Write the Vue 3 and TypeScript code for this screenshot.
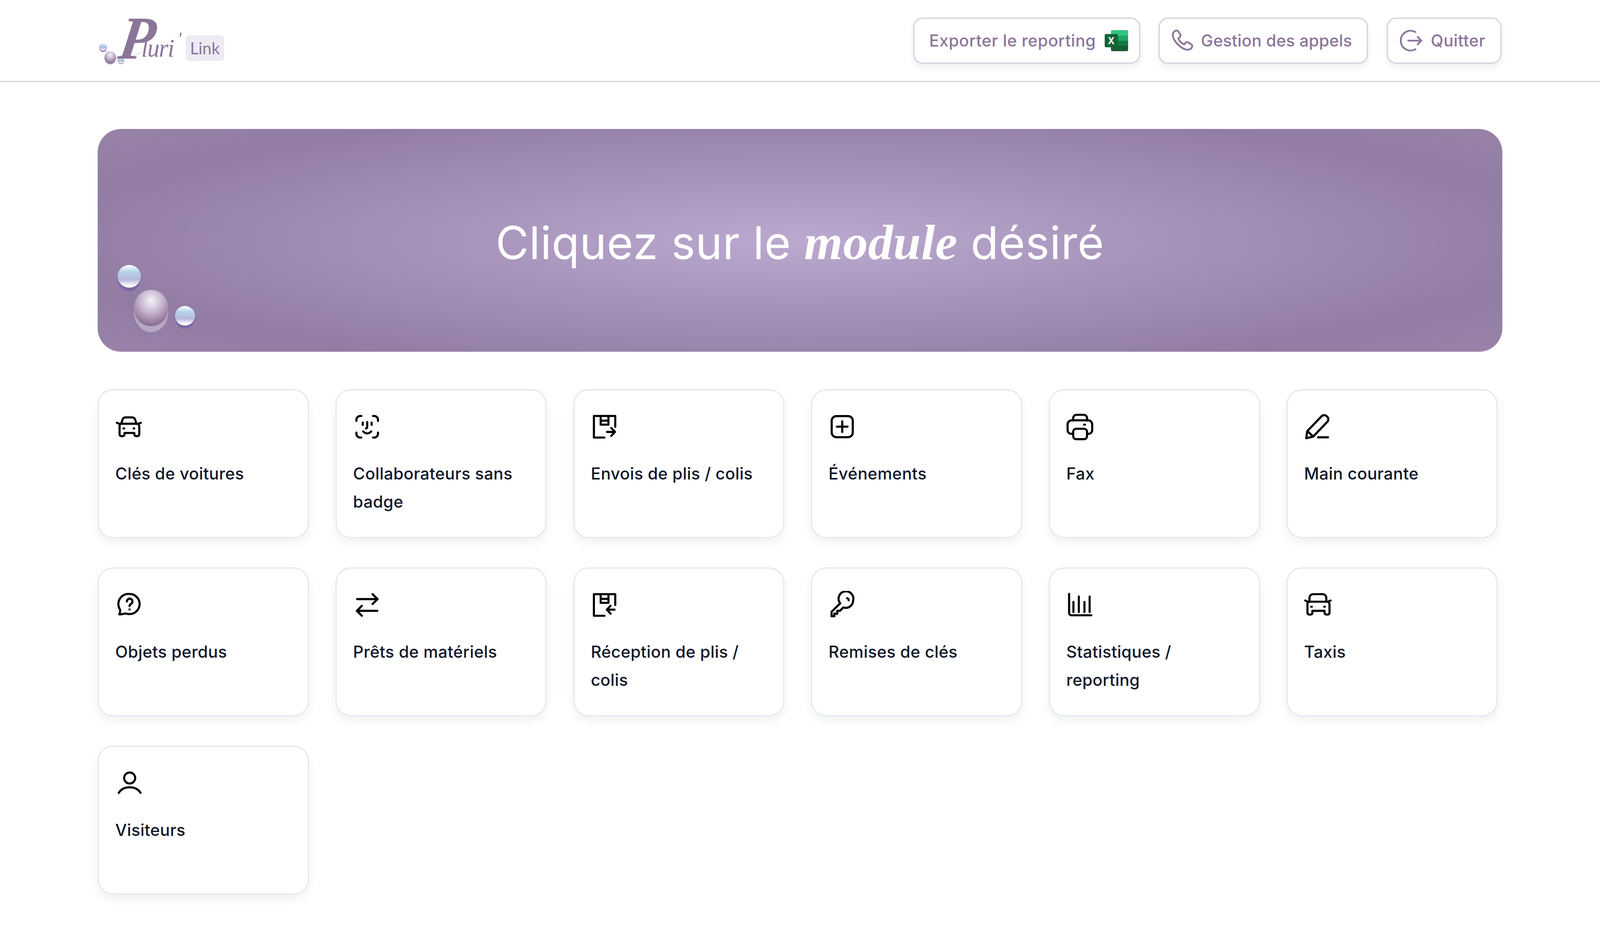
<script setup lang="ts">
// Module launcher: header actions, hero banner and the grid of module cards

interface ModuleCard {
  label: string
  paths: string[]
}

const squareBox = ['M21 12V2.8H2.8v18.4h9', 'M8.6 2.8v7.4h6.6V2.8', 'M8.6 6.8h6.6']

const modules: ModuleCard[] = [
  {
    label: 'Clés de voitures',
    paths: [
      'M5.1 9.4 6.2 6a2.9 2.9 0 0 1 2.7-2h5.4A2.9 2.9 0 0 1 17 6l1.1 3.4',
      'M1.4 8.6l2.2.9M21.8 8.6l-2.2.9',
      'M5 9.4h13.2a2.3 2.3 0 0 1 2.3 2.3v6.8a1.5 1.5 0 0 1-1.5 1.5h-1.2a1.5 1.5 0 0 1-1.5-1.5v-1.2H7.9v1.2a1.5 1.5 0 0 1-1.5 1.5H5.2a1.5 1.5 0 0 1-1.5-1.5v-6.8A2.3 2.3 0 0 1 5 9.4z',
      'M7.1 13.4h.5M15.7 13.4h.5'
    ]
  },
  {
    label: 'Collaborateurs sans badge',
    paths: [
      'M7 2.8H6A3.2 3.2 0 0 0 2.8 6v1',
      'M17 2.8h1A3.2 3.2 0 0 1 21.2 6v1',
      'M2.8 17v1A3.2 3.2 0 0 0 6 21.2h1',
      'M21.2 17v1a3.2 3.2 0 0 1-3.2 3.2h-1',
      'M8.2 8.4v2M15.8 8.4v2',
      'M12 8v4.4a1 1 0 0 1-1 1',
      'M8.6 16c1 1.1 2.2 1.7 3.4 1.7s2.4-.6 3.4-1.7'
    ]
  },
  {
    label: 'Envois de plis / colis',
    paths: [...squareBox, 'M14 16.4h6.2', 'M17.6 13l3.2 3.4-3.2 3.4']
  },
  {
    label: 'Événements',
    paths: [
      'M6.7 2.9h10a4 4 0 0 1 4 4v10a4 4 0 0 1-4 4h-10a4 4 0 0 1-4-4v-10a4 4 0 0 1 4-4z',
      'M11.7 7.4v9M7.2 11.9h9'
    ]
  },
  {
    label: 'Fax',
    paths: [
      'M5.8 6.6V4.6a2.8 2.8 0 0 1 2.8-2.8h6.2a2.8 2.8 0 0 1 2.8 2.8v2',
      'M5.8 18H4a3 3 0 0 1-3-3V10a3.5 3.5 0 0 1 3.5-3.5h14A3.5 3.5 0 0 1 22 10v5a3 3 0 0 1-3 3h-1.4',
      'M8.3 13.7h6.8a2.5 2.5 0 0 1 2.5 2.5v3.9a2.5 2.5 0 0 1-2.5 2.5H8.3a2.5 2.5 0 0 1-2.5-2.5v-3.9a2.5 2.5 0 0 1 2.5-2.5z',
      'M15.1 10.2h.7'
    ]
  },
  {
    label: 'Main courante',
    paths: [
      'M1.6 21.8l1-6.2L14.8 3a3 3 0 0 1 4.3 0l.5.5a3 3 0 0 1 0 4.3L7.6 20.4z',
      'M2.6 15.6l5 4.8',
      'M11.8 21h8.4'
    ]
  },
  {
    label: 'Objets perdus',
    paths: [
      'M12.2 2.6a8.6 8.6 0 0 1 0 17.2c-1.4 0-2.4-.5-3.4-.5-1.6 0-3.2 1-5.4.7.7-1.5 1-2.8.7-4.1A8.6 8.6 0 0 1 12.2 2.6z',
      'M9.9 9a2.4 2.4 0 1 1 3.6 2.1c-.9.5-1.3 1.1-1.3 1.9',
      'M12.2 15.7v.1'
    ]
  },
  {
    label: 'Prêts de matériels',
    paths: ['M3.4 7h17.4', 'M16.6 2.8 20.8 7l-4.2 4.2', 'M20.6 17H3.2', 'M7.4 12.8 3.2 17l4.2 4.2']
  },
  {
    label: 'Réception de plis / colis',
    paths: [...squareBox, 'M20.4 16h-6.2', 'M17 12.6 13.8 16l3.2 3.4']
  },
  {
    label: 'Remises de clés',
    paths: [
      'M21 8.2a6.3 6.3 0 0 1-8.4 5.9L9.8 17H7.5v2.4H5V21.6H2.6v-3.8L10 10.6A6.3 6.3 0 1 1 21 8.2z',
      'M15.8 6.2a1.6 1.6 0 0 1 1.4 1.8'
    ]
  },
  {
    label: 'Statistiques / reporting',
    paths: [
      'M2.3 2.6v16.2a2 2 0 0 0 2 2H21.2',
      'M6 9.4v8.6M10.6 4.8v13.2M15.4 9.4v8.6M19.8 4.8v13.2'
    ]
  },
  {
    label: 'Taxis',
    paths: [
      'M4.4 9.2V6A3.2 3.2 0 0 1 7.6 2.8h8A3.2 3.2 0 0 1 18.8 6v3.2',
      'M.8 8.2l2.2 1M22.4 8.2l-2.2 1',
      'M3.9 9.2h15.4a2.3 2.3 0 0 1 2.2 2.3v7.2a1.5 1.5 0 0 1-1.5 1.5h-1.2a1.5 1.5 0 0 1-1.5-1.5V17H6.9v1.7a1.5 1.5 0 0 1-1.5 1.5H4.2a1.5 1.5 0 0 1-1.5-1.5v-7.2a2.3 2.3 0 0 1 1.2-2.3z',
      'M5.9 13.5h.5M17 13.5h.5'
    ]
  },
  {
    label: 'Visiteurs',
    paths: ['M12.3 2.9a4.7 4.7 0 1 1 0 9.4 4.7 4.7 0 0 1 0-9.4z', 'M3 20.3c2-3.3 5.5-4.8 9.3-4.8s7.3 1.5 9.3 4.8']
  }
]
</script>

<template>
  <div class="page">
    <header class="topbar">
      <div class="brand">
        <svg class="logo" height="180" viewBox="0 0 240 180" preserveAspectRatio="none">
          <defs>
            <linearGradient id="pearlBlue" x1="0" y1="0" x2="0" y2="1">
              <stop offset="0" stop-color="#ffffff" />
              <stop offset="0.3" stop-color="#b5d3e8" />
              <stop offset="0.65" stop-color="#b8b8de" />
              <stop offset="0.92" stop-color="#ffffff" />
            </linearGradient>
            <radialGradient id="pearlMauve" cx="0.5" cy="0.3" r="0.7">
              <stop offset="0" stop-color="#f6f3f8" />
              <stop offset="0.45" stop-color="#c8b8d0" />
              <stop offset="1" stop-color="#86688f" />
            </radialGradient>
          </defs>
          <path d="M20 119 28 125M48 140c30 0 54-6 72-18" fill="none" stroke="#c9bfd4" stroke-width="1.5" />
          <ellipse cx="14.5" cy="112" rx="10.5" ry="11" fill="#8d78a8" />
          <ellipse cx="14.5" cy="110" rx="10.5" ry="9.5" fill="url(#pearlBlue)" />
          <ellipse cx="34" cy="139" rx="15.5" ry="16" fill="#b8a9c6" />
          <ellipse cx="34" cy="137" rx="15.5" ry="15.5" fill="url(#pearlMauve)" />
          <ellipse cx="63" cy="145" rx="9" ry="9" fill="#8d78a8" />
          <ellipse cx="63" cy="144" rx="9" ry="8" fill="url(#pearlBlue)" />
          <text class="logo-cap" x="74" y="140" transform="skewX(-9)">P</text>
          <text class="logo-rest" x="118" y="135">luri</text>
          <text class="logo-rest logo-tick" x="216" y="106">'</text>
        </svg>
        <span class="brand-tag">Link</span>
      </div>

      <nav class="actions">
        <button type="button" class="action-btn export-btn">
          <span>Exporter le reporting</span>
          <svg width="60" height="54" viewBox="0 0 60 54">
            <path d="M20 0h36a4 4 0 0 1 4 4v10H16V4a4 4 0 0 1 4-4z" fill="#33c481" />
            <rect x="16" y="14" width="44" height="13" fill="#21a366" />
            <rect x="16" y="27" width="44" height="13" fill="#107c41" />
            <path d="M16 40h44v10a4 4 0 0 1-4 4H20a4 4 0 0 1-4-4z" fill="#185c37" />
            <rect x="0" y="10" width="34" height="34" rx="4" fill="#0f6636" />
            <text class="excel-x" x="17" y="36">X</text>
          </svg>
        </button>
        <button type="button" class="action-btn call-btn">
          <svg class="action-icon" width="72" height="72" viewBox="0 0 24 24">
            <path d="M4.6 5.4C5.4 3.4 7.8 2.6 8.9 4.2l1.5 2.4c.6 1 .3 2-.6 2.7l-1 .8c.9 2.2 2.9 4.2 5.1 5.1l.8-1c.7-.9 1.7-1.2 2.7-.6l2.4 1.5c1.6 1.1.8 3.5-1.2 4.3-2 .8-4.5.3-7.8-2.1-3.6-2.8-5.7-5.8-6.4-8.4-.3-1.2-.3-2.4-.3-3.1z" />
          </svg>
          <span>Gestion des appels</span>
        </button>
        <button type="button" class="action-btn">
          <svg class="action-icon" width="72" height="72" viewBox="0 0 24 24">
            <path d="M15.5 4.7A8.3 8.3 0 0 0 3 12a8.3 8.3 0 0 0 12.5 7.3" />
            <path d="M9.4 12h11.2M17.4 8.8l3.2 3.2-3.2 3.2" />
          </svg>
          <span>Quitter</span>
        </button>
      </nav>
    </header>

    <main class="content">
      <section class="hero">
        <h1 class="hero-title">Cliquez sur le <em>module</em> désiré</h1>
        <svg class="hero-pearls" height="174" viewBox="0 0 216 174" preserveAspectRatio="none">
          <ellipse cx="31.5" cy="34" rx="31.5" ry="33" fill="#7a67a3" />
          <ellipse cx="31.5" cy="29" rx="31.5" ry="29" fill="url(#pearlBlue)" />
          <ellipse cx="90.5" cy="120" rx="46.5" ry="52" fill="#b6a7c5" />
          <ellipse cx="90.5" cy="110" rx="46.5" ry="46.5" fill="url(#pearlMauve)" />
          <ellipse cx="182" cy="134" rx="27" ry="29" fill="#7a67a3" />
          <ellipse cx="182" cy="130" rx="27" ry="25" fill="url(#pearlBlue)" />
        </svg>
      </section>

      <section class="module-grid">
        <a v-for="item in modules" :key="item.label" class="module-card">
          <svg class="module-icon" width="72" height="72" viewBox="0 0 24 24">
            <path v-for="(d, i) in item.paths" :key="i" :d="d" />
          </svg>
          <span class="module-label">{{ item.label }}</span>
        </a>
      </section>
    </main>
  </div>
</template>

<style>
html,
body {
  background: #fff;
}
</style>

<style scoped>
/* horizontal measures follow the window, --x is one pixel of the 4320 wide design */
.page {
  --x: calc(100vw / 4320);
  min-height: 2436px;
  background: #fff;
  font-family: Inter, "Liberation Sans", sans-serif;
}

.topbar {
  display: flex;
  align-items: center;
  justify-content: space-between;
  height: 210px;
  box-sizing: border-box;
  padding: 0 calc(266 * var(--x)) 0 calc(264 * var(--x));
  border-bottom: 3px solid #cbd5e1;
}

.brand {
  display: flex;
  align-items: center;
  margin-top: -7px;
}

.logo {
  display: block;
  width: calc(240 * var(--x));
  margin-right: calc(-3 * var(--x));
}

.logo-cap {
  font-family: "Liberation Serif", serif;
  font-style: italic;
  font-weight: 700;
  font-size: 156px;
  fill: #8b7599;
}

.logo-rest {
  font-family: "Liberation Serif", serif;
  font-style: italic;
  font-size: 66px;
  letter-spacing: -2px;
  fill: #8b7599;
}

.logo-tick {
  font-size: 48px;
}

.excel-x {
  font-family: Inter, sans-serif;
  font-weight: 700;
  font-size: 24px;
  fill: #fff;
  text-anchor: middle;
}

.brand-tag {
  margin-top: 46px;
  padding: 6px calc(12 * var(--x));
  height: 66px;
  box-sizing: border-box;
  border-radius: 9px;
  background: #eeeaf2;
  color: #8b7599;
  font-size: 42px;
  line-height: 54px;
  font-family: Lato, sans-serif;
}

.actions {
  display: flex;
  align-items: center;
  gap: calc(50 * var(--x));
}

.action-btn {
  display: flex;
  align-items: center;
  gap: calc(14 * var(--x));
  height: 118px;
  padding: 0 calc(40 * var(--x)) 0 calc(26 * var(--x));
  border: 3px solid #d6cfe0;
  border-radius: 24px;
  background: #fff;
  box-shadow: 0 9px 15px rgba(30, 20, 60, 0.07);
  color: #8b7599;
  font-family: inherit;
  font-size: 42px;
  font-weight: 500;
  letter-spacing: 0.6px;
  cursor: pointer;
}

.export-btn {
  padding: 0 calc(29 * var(--x)) 0 calc(40 * var(--x));
  gap: calc(24 * var(--x));
}

.call-btn {
  padding-left: calc(22 * var(--x));
  gap: calc(13 * var(--x));
  letter-spacing: 0.2px;
}

.action-icon {
  fill: none;
  stroke: currentColor;
  stroke-width: 1.5;
  stroke-linecap: round;
  stroke-linejoin: round;
}

.content {
  padding: 120px calc(264 * var(--x)) 0;
}

.hero {
  position: relative;
  display: flex;
  align-items: center;
  justify-content: center;
  height: 570px;
  padding-top: 10px;
  box-sizing: border-box;
  border-radius: 60px;
  background: radial-gradient(
    ellipse calc(2830 * var(--x)) 490px at 50% 50%,
    #bba9d0 0%,
    #927ca3 70.7%,
    #9c86ab 100%
  );
}

.hero-title {
  margin: 0;
  color: #fff;
  font-size: 116px;
  font-weight: 400;
  line-height: 1;
  letter-spacing: 0.8px;
}

.hero-title em {
  font-family: "Liberation Serif", serif;
  font-weight: 700;
  font-size: 127px;
}

.hero-pearls {
  position: absolute;
  left: calc(54 * var(--x));
  top: 348px;
  width: calc(216 * var(--x));
}

.module-grid {
  display: flex;
  flex-wrap: wrap;
  gap: 75px calc(72 * var(--x));
  margin-top: 96px;
}

.module-card {
  display: flex;
  flex-direction: column;
  width: calc(570 * var(--x));
  height: 381px;
  box-sizing: border-box;
  padding: 57px calc(44 * var(--x)) 0;
  border: 3px solid #e2e8f0;
  border-radius: 39px;
  background: #fff;
  box-shadow: 0 12px 24px rgba(15, 23, 42, 0.06);
}

.module-icon {
  flex-shrink: 0;
  fill: none;
  stroke: #000;
  stroke-width: 1.8;
  stroke-linecap: round;
  stroke-linejoin: round;
}

.module-label {
  margin-top: 48px;
  color: #0f172a;
  font-size: 42px;
  font-weight: 500;
  line-height: 72px;
  letter-spacing: 0.4px;
}
</style>
